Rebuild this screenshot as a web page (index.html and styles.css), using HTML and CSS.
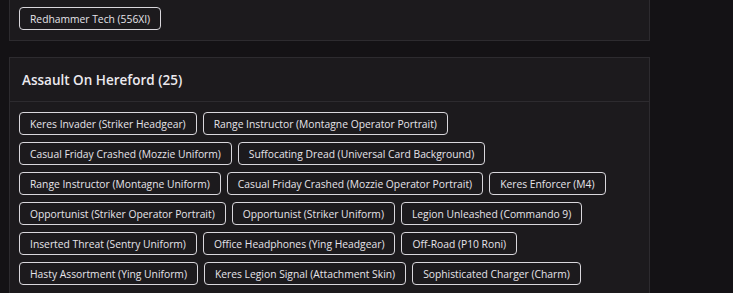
FILE: index.html
```html
<!DOCTYPE html>
<html lang="en">
<head>
  <meta charset="UTF-8" />
  <title>Collection</title>
  <link rel="stylesheet" href="styles.css">
</head>
<body>
  <div class="column">
    <div class="card card-cut">
      <div class="card-body">
        <span class="tag">Redhammer Tech (556XI)</span>
      </div>
    </div>

    <div class="card">
      <div class="card-head">Assault On Hereford (25)</div>
      <div class="card-body">
        <span class="tag">Keres Invader (Striker Headgear)</span>
        <span class="tag">Range Instructor (Montagne Operator Portrait)</span>
        <span class="tag">Casual Friday Crashed (Mozzie Uniform)</span>
        <span class="tag">Suffocating Dread (Universal Card Background)</span>
        <span class="tag">Range Instructor (Montagne Uniform)</span>
        <span class="tag">Casual Friday Crashed (Mozzie Operator Portrait)</span>
        <span class="tag">Keres Enforcer (M4)</span>
        <span class="tag">Opportunist (Striker Operator Portrait)</span>
        <span class="tag">Opportunist (Striker Uniform)</span>
        <span class="tag">Legion Unleashed (Commando 9)</span>
        <span class="tag">Inserted Threat (Sentry Uniform)</span>
        <span class="tag">Office Headphones (Ying Headgear)</span>
        <span class="tag">Off-Road (P10 Roni)</span>
        <span class="tag">Hasty Assortment (Ying Uniform)</span>
        <span class="tag">Keres Legion Signal (Attachment Skin)</span>
        <span class="tag">Sophisticated Charger (Charm)</span>
      </div>
    </div>
  </div>
</body>
</html>
```

FILE: styles.css
```css
body {
  margin: 0;
  background: #141215;
  color: #e6e4e8;
  font-family: "Open Sans", "Noto Sans", sans-serif;
  overflow: hidden;
}
.column {
  width: 641px;
  margin-left: 9px;
  display: flex;
  flex-direction: column;
  gap: 16px;
}
.card {
  background: #1c1a1d;
  border: 1px solid #2d2b2f;
}
.card-cut {
  margin-top: -4px;
}
.card-head {
  height: 43px;
  padding: 0 12px;
  display: flex;
  align-items: center;
  font-size: 13.5px;
  font-weight: 600;
  color: #ebe9ee;
  border-bottom: 1px solid #2d2b2f;
}
.card-body {
  display: flex;
  flex-wrap: wrap;
  gap: 7px 6px;
  padding: 10px 9px;
}
.tag {
  height: 23px;
  box-sizing: border-box;
  padding: 0 10px;
  display: inline-flex;
  align-items: center;
  border: 1px solid #d9d7dc;
  border-radius: 4px;
  font-size: 10.3px;
  color: #e6e4ea;
  white-space: nowrap;
}
```
